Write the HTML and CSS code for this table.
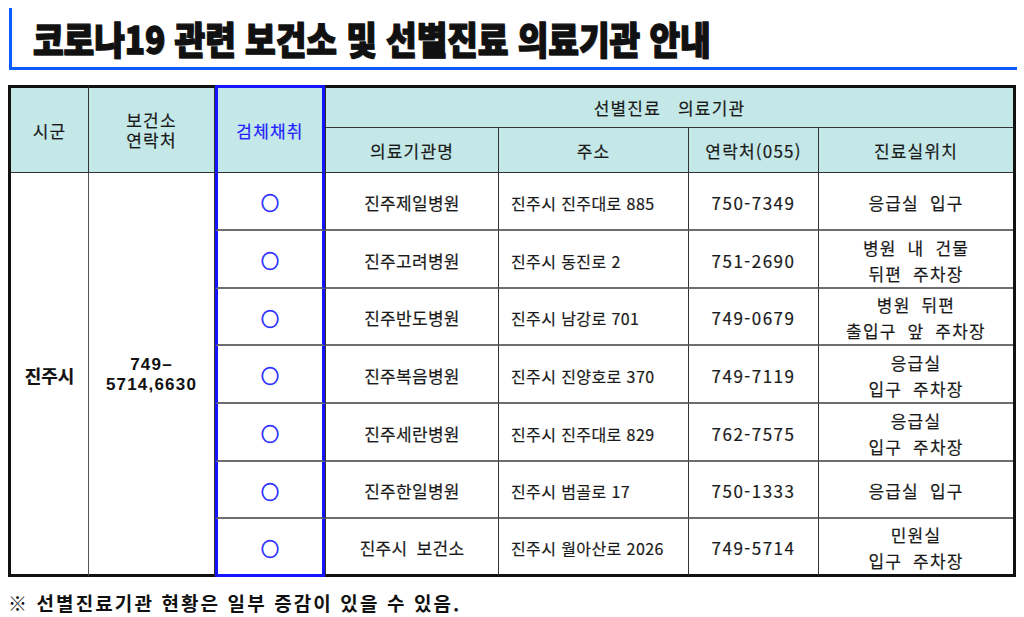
FILE: index.html
```html
<!DOCTYPE html>
<html lang="ko">
<head>
<meta charset="utf-8">
<title>코로나19 관련 보건소 및 선별진료 의료기관 안내</title>
<link rel="stylesheet" href="styles.css">
</head>
<body>
<div class="title"><h1 class="title-text">코로나19 관련 보건소 및 선별진료 의료기관 안내</h1></div>
<table class="grid">
  <colgroup>
    <col class="w1"><col class="w2"><col class="w3"><col class="w4"><col class="w5"><col class="w6"><col class="w7">
  </colgroup>
  <thead>
    <tr class="h1">
      <th rowspan="2" class="top">시군</th>
      <th rowspan="2" class="top two"><span class="ln">보건소</span><span class="ln">연락처</span></th>
      <th rowspan="2" class="top blue blue-top">검체채취</th>
      <th colspan="4" class="top after-blue last wide">선별진료 의료기관</th>
    </tr>
    <tr class="h2">
      <th class="after-blue">의료기관명</th>
      <th>주소</th>
      <th>연락처(055)</th>
      <th class="last">진료실위치</th>
    </tr>
  </thead>
  <tbody>
    <tr class="r58">
      <td rowspan="7" class="city bottom">진주시</td>
      <td rowspan="7" class="main-tel bottom">749–<br>5714,6630</td>
      <td class="blue"><span class="mark">○</span></td>
      <td class="after-blue name">진주제일병원</td>
      <td class="addr">진주시 진주대로 885</td>
      <td class="tel">750-7349</td>
      <td class="loc last">응급실 입구</td>
    </tr>
    <tr class="r58">
      <td class="blue"><span class="mark">○</span></td>
      <td class="after-blue name">진주고려병원</td>
      <td class="addr">진주시 동진로 2</td>
      <td class="tel">751-2690</td>
      <td class="loc last">병원 내 건물<br>뒤편 주차장</td>
    </tr>
    <tr class="r57">
      <td class="blue"><span class="mark">○</span></td>
      <td class="after-blue name">진주반도병원</td>
      <td class="addr">진주시 남강로 701</td>
      <td class="tel">749-0679</td>
      <td class="loc last">병원 뒤편<br>출입구 앞 주차장</td>
    </tr>
    <tr class="r58">
      <td class="blue"><span class="mark">○</span></td>
      <td class="after-blue name">진주복음병원</td>
      <td class="addr">진주시 진양호로 370</td>
      <td class="tel">749-7119</td>
      <td class="loc last">응급실<br>입구 주차장</td>
    </tr>
    <tr class="r58">
      <td class="blue"><span class="mark">○</span></td>
      <td class="after-blue name">진주세란병원</td>
      <td class="addr">진주시 진주대로 829</td>
      <td class="tel">762-7575</td>
      <td class="loc last">응급실<br>입구 주차장</td>
    </tr>
    <tr class="r57">
      <td class="blue"><span class="mark">○</span></td>
      <td class="after-blue name">진주한일병원</td>
      <td class="addr">진주시 범골로 17</td>
      <td class="tel">750-1333</td>
      <td class="loc last">응급실 입구</td>
    </tr>
    <tr class="r58 end">
      <td class="blue"><span class="mark">○</span></td>
      <td class="after-blue name">진주시 보건소</td>
      <td class="addr">진주시 월아산로 2026</td>
      <td class="tel">749-5714</td>
      <td class="loc last">민원실<br>입구 주차장</td>
    </tr>
  </tbody>
</table>
<p class="note">※ 선별진료기관 현황은 일부 증감이 있을 수 있음.</p>
</body>
</html>
```

FILE: styles.css
```css
html, body {
  margin: 0;
  padding: 0;
  background: #ffffff;
}

body {
  font-family: "Noto Sans CJK KR", "Noto Sans", sans-serif;
  color: #222222;
}

.title {
  box-sizing: border-box;
  margin: 8px 0 0 9px;
  width: 1008px;
  height: 62px;
  border-left: 3px solid #0b5cff;
  border-bottom: 3px solid #0b5cff;
  display: flex;
  align-items: center;
  padding-left: 21px;
}

.title-text {
  margin: 0;
  display: inline-block;
  font-size: 38px;
  font-weight: 900;
  line-height: 1;
  color: #111111;
  white-space: nowrap;
  transform: scaleX(0.875);
  transform-origin: left center;
  -webkit-text-stroke: 1.3px #111111;
  text-shadow: 1px 1px 0 #9a9a9a;
}

.grid {
  margin: 15px 0 0 8px;
  width: 1008px;
  table-layout: fixed;
  border-collapse: separate;
  border-spacing: 0;
  border-left: 3px solid #111111;
  border-right: 3px solid #111111;
}

.w1 { width: 78px; }
.w2 { width: 126px; }
.w3 { width: 110px; }
.w4 { width: 174px; }
.w5 { width: 190px; }
.w6 { width: 130px; }
.w7 { width: 194px; }

th, td {
  padding: 0;
  text-align: center;
  vertical-align: middle;
  font-size: 17px;
  font-weight: 400;
  color: #1a1a1a;
  letter-spacing: 1.2px;
  border-right: 1px solid #333333;
  border-bottom: 1px solid #333333;
  -webkit-text-stroke: 0.2px #1a1a1a;
}

th {
  background: #c4e8e7;
  line-height: 21px;
}

.ln {
  display: block;
  line-height: 20px;
}

td {
  line-height: 26px;
  padding-top: 3px;
  border-bottom: 2px solid #6e6e6e;
}

.last { border-right: none; }

.top { border-top: 3px solid #111111; }

.blue {
  border-left: 3px solid #1414ff;
  border-right: 3px solid #1414ff;
}

th.blue {
  color: #1f1fff;
  -webkit-text-stroke: 0.2px #1f1fff;
}

.blue-top { border-top-color: #1414ff; }

.after-blue { border-left: 1px solid #333333; }

tr.h1 { height: 43px; }
tr.h2 { height: 45px; }
tr.r58 { height: 58px; }
tr.r57 { height: 57px; }

.wide { word-spacing: 11px; }

td.bottom,
tr.end td {
  border-bottom: 3px solid #111111;
}

tr.end td.blue {
  border-bottom-color: #1414ff;
}

.city {
  font-size: 18px;
  font-weight: 700;
  color: #111111;
  letter-spacing: 0;
  padding-top: 2px;
  border-bottom-color: #111111;
  border-right-color: #555555;
}

.main-tel {
  font-family: "Liberation Sans", Arial, sans-serif;
  font-size: 17px;
  font-weight: 700;
  color: #111111;
  letter-spacing: 1.2px;
  line-height: 20px;
  padding-top: 2px;
  -webkit-text-stroke: 0;
}

.mark {
  color: #3535ff;
  font-size: 18px;
  font-weight: 700;
  letter-spacing: 0;
  -webkit-text-stroke: 0.8px #3535ff;
}

.name {
  letter-spacing: 0.3px;
  word-spacing: 4px;
}

.addr {
  text-align: left;
  padding-left: 12px;
  font-size: 16px;
  letter-spacing: 0.4px;
}

.tel {
  font-size: 17px;
  letter-spacing: 1.5px;
}

.loc {
  letter-spacing: 1.2px;
  word-spacing: 5px;
}

.note {
  margin: 13px 0 0 8px;
  font-size: 19px;
  font-weight: 700;
  line-height: 26px;
  letter-spacing: 2.1px;
  color: #111111;
}
```
